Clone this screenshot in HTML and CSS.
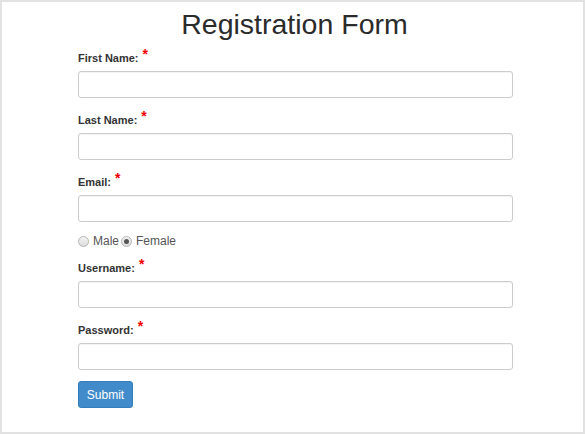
FILE: index.html
```html
<!DOCTYPE html>
<html>
<head>
<meta charset="utf-8">
<link rel="stylesheet" href="styles.css">
</head>
<body>
<div class="page">
  <h1 class="title">Registration Form</h1>
  <form class="form">
    <div class="group">
      <label class="label">First Name: <span class="req">*</span></label>
      <input class="field" type="text">
    </div>
    <div class="group">
      <label class="label">Last Name: <span class="req">*</span></label>
      <input class="field" type="text">
    </div>
    <div class="group group-tight">
      <label class="label">Email: <span class="req">*</span></label>
      <input class="field" type="text">
    </div>
    <div class="radios">
      <label class="radio"><input type="radio" name="g"> Male</label>
      <label class="radio"><input type="radio" name="g" checked> Female</label>
    </div>
    <div class="group">
      <label class="label">Username: <span class="req">*</span></label>
      <input class="field" type="text">
    </div>
    <div class="group group-last">
      <label class="label">Password: <span class="req">*</span></label>
      <input class="field" type="password">
    </div>
    <button class="submit" type="button">Submit</button>
  </form>
</div>
</body>
</html>
```
FILE: styles.css
```css
html, body {
  margin: 0;
  padding: 0;
  background: #fff;
}
.page {
  box-sizing: border-box;
  width: 585px;
  height: 434px;
  border: 2px solid #e2e2e2;
  font-family: "Liberation Sans", Arial, sans-serif;
  color: #333;
}
.title {
  margin: 0;
  padding-top: 6px;
  padding-left: 4px;
  font-size: 28.5px;
  line-height: 32px;
  font-weight: normal;
  text-align: center;
  color: #2b2b2b;
}
.form {
  margin: 10px 0 0 76px;
  width: 435px;
  display: flex;
  flex-direction: column;
}
.group {
  display: flex;
  flex-direction: column;
  gap: 5px;
  margin-bottom: 14px;
}
.group-tight {
  margin-bottom: 10px;
}
.group-last {
  margin-bottom: 11px;
}
.label {
  font-size: 11px;
  font-weight: bold;
  line-height: 16px;
  color: #333;
}
.req {
  color: #e00;
  font-size: 14px;
  position: relative;
  top: -3px;
  line-height: 0;
  margin-left: 1px;
}
.field {
  box-sizing: border-box;
  width: 435px;
  height: 27px;
  margin: 0;
  border: 1px solid #ccc;
  border-radius: 3px;
  background: #fff;
  box-shadow: inset 0 1px 1px rgba(0,0,0,0.05);
  outline: none;
}
.radios {
  display: flex;
  align-items: center;
  height: 18px;
  margin-bottom: 10px;
  gap: 2px;
}
.radio {
  display: flex;
  align-items: center;
  gap: 4px;
  font-size: 12px;
  color: #555;
}
.radio input {
  -webkit-appearance: none;
  appearance: none;
  box-sizing: border-box;
  width: 11px;
  height: 11px;
  margin: 0;
  border: 1px solid #b5b5b5;
  border-radius: 50%;
  background: linear-gradient(#f4f4f4, #dcdcdc);
  position: relative;
}
.radio input:checked::after {
  content: "";
  position: absolute;
  left: 2px;
  top: 2px;
  width: 5px;
  height: 5px;
  border-radius: 50%;
  background: #555;
}
.submit {
  box-sizing: border-box;
  width: 55px;
  height: 27px;
  padding: 0;
  border: 1px solid #357ebd;
  border-radius: 3px;
  background: #428bca;
  color: #fff;
  font-family: "Liberation Sans", Arial, sans-serif;
  font-size: 12px;
}
```
